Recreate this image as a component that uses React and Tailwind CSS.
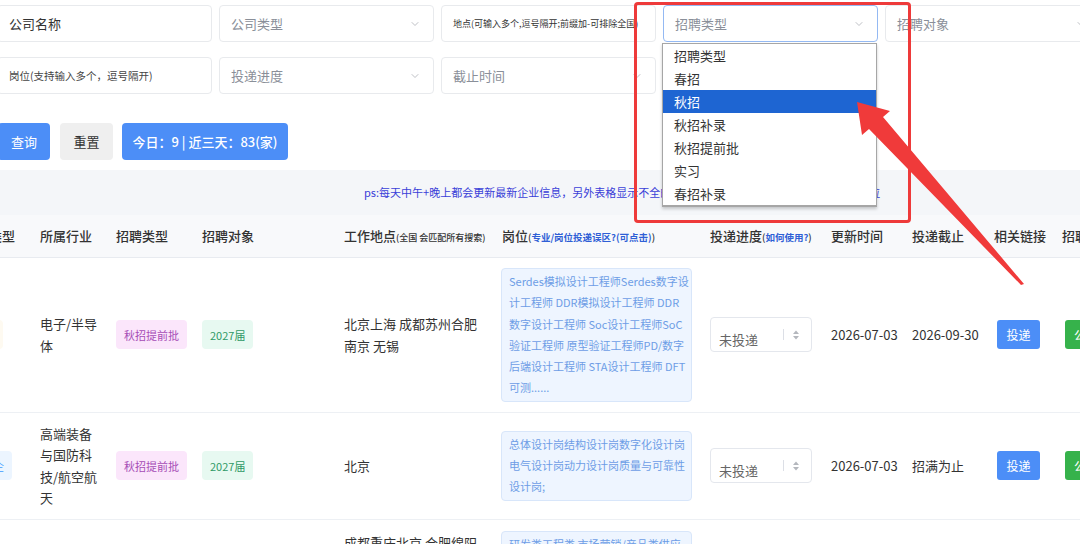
import { ChevronDown } from 'lucide-react'

const recruitTypes = ['招聘类型', '春招', '秋招', '秋招补录', '秋招提前批', '实习', '春招补录']

const rows = [
  {
    kind: '民企',
    kindTone: 'bg-[#fefaf1] text-[#e6a23c]',
    kindPad: 'pr-[37px]',
    industry: ['电子/半导', '体'],
    type: '秋招提前批',
    target: '2027届',
    places: ['北京上海 成都苏州合肥', '南京 无锡'],
    jobs: [
      'Serdes模拟设计工程师Serdes数字设',
      '计工程师 DDR模拟设计工程师 DDR',
      '数字设计工程师 Soc设计工程师SoC',
      '验证工程师 原型验证工程师PD/数字',
      '后端设计工程师 STA设计工程师 DFT',
      '可测......',
    ],
    updated: '2026-07-03',
    deadline: '2026-09-30',
    pad: 'py-[10px]',
  },
  {
    kind: '国企',
    kindTone: 'bg-[#ecf5ff] text-[#409eff]',
    kindPad: 'pr-[28px]',
    industry: ['高端装备', '与国防科', '技/航空航', '天'],
    type: '秋招提前批',
    target: '2027届',
    places: ['北京'],
    jobs: ['总体设计岗结构设计岗数字化设计岗', '电气设计岗动力设计岗质量与可靠性', '设计岗;'],
    updated: '2026-07-03',
    deadline: '招满为止',
    pad: 'py-[10px]',
  },
  {
    kind: '国企',
    kindTone: 'bg-[#ecf5ff] text-[#409eff]',
    kindPad: 'pr-[28px]',
    industry: ['汽车/交通', '运输'],
    type: '秋招提前批',
    target: '2027届',
    places: ['成都重庆北京 合肥绵阳', '西安 武汉 深圳 上海', '南京 杭州 广州', '长沙 苏州 无锡', '天津 青岛', '沈阳'],
    jobs: [
      '研发类工程类 市场营销/产品类供应',
      '链类 职能类 信息技术类 生产制造',
      '类 质量管理类 财务类 人力资源类',
      '项目管理类 采购类 物流类 销售类',
      '技术支持类 测试验证类 工艺类 设',
      '计类......',
    ],
    updated: '2026-07-02',
    deadline: '2026-10-31',
    pad: 'py-[11px]',
  },
]

function Field({ children, select, focus }) {
  return (
    <div
      className={`flex h-[37px] w-[215px] shrink-0 items-center justify-between overflow-hidden rounded-[4px] border bg-white pl-[11px] pr-[12px] ${
        focus ? 'border-[#94b9f3]' : 'border-[#e8eaed]'
      }`}
    >
      {children}
      {select && <ChevronDown size={12} strokeWidth={1.5} className="shrink-0 text-[#a8abb2]" />}
    </div>
  )
}

function Tag({ children, tone }) {
  return (
    <span className={`inline-flex h-[29px] items-center whitespace-nowrap rounded-[4px] px-[8px] text-[11px] ${tone}`}>
      {children}
    </span>
  )
}

function StatusSelect() {
  return (
    <div className="flex h-[35px] w-[102px] items-center rounded-[4px] border border-[#e4e7ed] bg-white pl-[8px] text-[13px] text-[#666]">
      <span className="mt-[9px]">未投递</span>
      <span className="ml-auto h-[11px] w-px bg-[#dcdfe6]" />
      <svg width="6" height="10" viewBox="0 0 6 10" className="ml-[9px] mr-[12px]">
        <polygon points="0,4 3,0.5 6,4" fill="#b4b7bd" />
        <polygon points="0,6 3,9.5 6,6" fill="#b4b7bd" />
      </svg>
    </div>
  )
}

export default function App() {
  return (
    <div className="relative h-[544px] w-[1080px] overflow-hidden bg-white font-['Noto_Sans_CJK_SC','Noto_Sans',sans-serif] text-[#333] antialiased">
      {/* filters */}
      <div className="pt-[5px]">
        <div className="-ml-[3px] flex gap-[7px]">
          <Field>
            <span className="text-[13px] text-[#333]">公司名称</span>
          </Field>
          <Field select>
            <span className="text-[13px] text-[#8a8f99]">公司类型</span>
          </Field>
          <Field>
            <span className="whitespace-nowrap text-[9px] text-[#333]">地点(可输入多个,逗号隔开;前缀加-可排除全国)</span>
          </Field>
          <Field select focus>
            <span className="text-[13px] text-[#8a8f99]">招聘类型</span>
          </Field>
          <Field select>
            <span className="text-[13px] text-[#8a8f99]">招聘对象</span>
          </Field>
        </div>

        <div className="-ml-[3px] mt-[15px] flex gap-[7px]">
          <Field>
            <span className="whitespace-nowrap text-[10.5px] text-[#444]">岗位(支持输入多个，逗号隔开)</span>
          </Field>
          <Field select>
            <span className="text-[13px] text-[#8a8f99]">投递进度</span>
          </Field>
          <Field select>
            <span className="text-[13px] text-[#8a8f99]">截止时间</span>
          </Field>
        </div>

        <div className="-ml-[2px] mt-[29px] flex items-center">
          <button className="h-[37px] w-[52px] rounded-[4px] bg-[#4c8ef7] text-[13px] text-white">查询</button>
          <button className="ml-[10px] h-[37px] w-[53px] rounded-[4px] bg-[#efefef] text-[13px] text-[#333]">重置</button>
          <button className="ml-[9px] h-[37px] w-[166px] rounded-[4px] bg-[#4c8ef7] text-[13px] font-medium text-white">
            今日：9 | 近三天：83(家)
          </button>
        </div>
      </div>

      {/* notice */}
      <div className="mt-[10px] flex h-[45px] items-center whitespace-nowrap bg-[#f4f6f9] pl-[364px] text-[11px] text-[#3a40d8]">
        ps:每天中午+晚上都会更新最新企业信息，另外表格显示不全的可以鼠标悬停查看，或者左右拖动查看岗位
      </div>

      {/* table header */}
      <div className="grid h-[43px] grid-cols-[40px_76px_86px_142px_157px_209px_121px_81px_82px_68px_60px] items-center whitespace-nowrap border-b border-[#e8ebf0] bg-[#f8f9fb] text-[13px] font-medium text-[#333]">
        <div className="flex justify-end overflow-hidden pr-[25px]">
          <span className="shrink-0">公司类型</span>
        </div>
        <div>所属行业</div>
        <div>招聘类型</div>
        <div>招聘对象</div>
        <div>
          工作地点<span className="text-[9px]">(全国 会匹配所有搜索)</span>
        </div>
        <div className="pl-px">
          岗位<span className="text-[9.5px]">(<span className="font-bold text-[#2f5fd6]">专业/岗位投递误区?(可点击)</span>)</span>
        </div>
        <div>
          投递进度<span className="text-[9.5px]">(<span className="font-bold text-[#2f5fd6]">如何使用?</span>)</span>
        </div>
        <div>更新时间</div>
        <div>投递截止</div>
        <div>相关链接</div>
        <div>招聘公告</div>
      </div>

      {/* table rows */}
      {rows.map((row, i) => (
        <div
          key={i}
          className={`grid grid-cols-[40px_76px_86px_142px_157px_209px_121px_81px_82px_68px_60px] items-center border-b border-[#edf0f4] text-[13px] text-[#333] ${row.pad}`}
        >
          <div className={`flex justify-end overflow-hidden ${row.kindPad}`}>
            <span className="shrink-0">
              <Tag tone={row.kindTone}>{row.kind}</Tag>
            </span>
          </div>
          <div className="leading-[21.5px]">
            {row.industry.map((l) => (
              <div key={l} className="whitespace-nowrap">{l}</div>
            ))}
          </div>
          <div>
            <Tag tone="bg-[#fbe6fb] text-[#a64cb6]">{row.type}</Tag>
          </div>
          <div>
            <Tag tone="bg-[#e7f9f1] text-[#2f9a66]">{row.target}</Tag>
          </div>
          <div className="leading-[22px]">
            {row.places.map((l) => (
              <div key={l} className="whitespace-nowrap">{l}</div>
            ))}
          </div>
          <div>
            <div className="w-[191px] rounded-[4px] border border-[#d8e6fa] bg-[#eef5ff] px-[7px] py-[2px] text-[11px] leading-[21.3px] text-[#6d9de6]">
              {row.jobs.map((l) => (
                <div key={l} className="whitespace-nowrap">{l}</div>
              ))}
            </div>
          </div>
          <div>
            <StatusSelect />
          </div>
          <div className="whitespace-nowrap">{row.updated}</div>
          <div className="whitespace-nowrap">{row.deadline}</div>
          <div className="pl-[3px]">
            <button className="h-[29px] w-[43px] rounded-[3px] bg-[#4c8ef7] text-[12px] text-white">投递</button>
          </div>
          <div className="pl-[3px]">
            <button className="h-[29px] whitespace-nowrap rounded-[3px] bg-[#36b24b] px-[9px] text-[12px] text-white">公众号</button>
          </div>
        </div>
      ))}

      {/* open native listbox of 招聘类型 */}
      <div className="absolute left-[662px] top-[43px] w-[215px] border border-b-2 border-[#a6a6a6] bg-white text-[13px] text-[#333] shadow-[0_2px_3px_rgba(0,0,0,0.2)]">
        {recruitTypes.map((t) => (
          <div
            key={t}
            className={`h-[23px] pl-[11px] leading-[23px] ${t === '秋招' ? 'bg-[#1e65d2] text-white' : ''}`}
          >
            {t}
          </div>
        ))}
      </div>

      {/* annotation: red frame + arrow */}
      <div className="pointer-events-none absolute left-[634px] top-[2px] h-[221px] w-[277px] rounded-[4px] border-[3px] border-[#ee3a3a]" />
      <svg className="pointer-events-none absolute left-0 top-0" width="1080" height="544" viewBox="0 0 1080 544">
        <polygon
          points="857,102 890,111 883,117 1024,284 1021,285 869,129 862,135"
          fill="#f03a3a"
        />
      </svg>
    </div>
  )
}
